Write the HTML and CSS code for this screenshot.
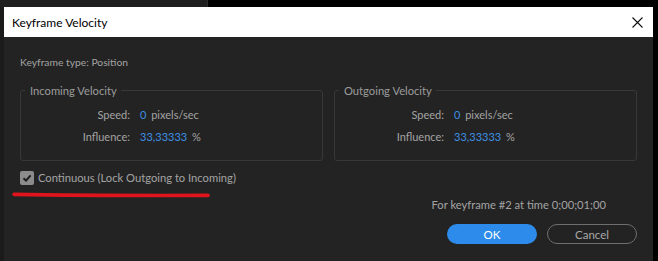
FILE: index.html
```html
<!DOCTYPE html>
<html lang="en">
<head>
    <meta charset="UTF-8">
    <meta name="viewport" content="width=device-width, initial-scale=1.0">
    <title>Keyframe Velocity</title>
    <link rel="stylesheet" href="styles.css">
</head>
<body>
    <div class="top-strip">
        <div class="panel-edge"></div>
    </div>

    <div class="screen">
        <div class="left-edge"></div>

        <div class="dialog">
            <header class="titlebar">
                <span class="title">Keyframe Velocity</span>
                <svg class="close" width="11" height="11" viewBox="0 0 11 11">
                    <path d="M0.5 0.5 L10.5 10.5 M10.5 0.5 L0.5 10.5" stroke="#111" stroke-width="1.1" fill="none"/>
                </svg>
            </header>

            <main class="content">
                <p class="type">Keyframe type: Position</p>

                <div class="groups">
                    <fieldset class="group">
                        <legend>Incoming Velocity</legend>
                        <div class="fields">
                            <span class="label">Speed:</span>
                            <span><span class="value">0</span> pixels/sec</span>
                            <span class="label">Influence:</span>
                            <span><span class="value">33,33333</span> %</span>
                        </div>
                    </fieldset>

                    <fieldset class="group">
                        <legend>Outgoing Velocity</legend>
                        <div class="fields">
                            <span class="label">Speed:</span>
                            <span><span class="value">0</span> pixels/sec</span>
                            <span class="label">Influence:</span>
                            <span><span class="value">33,33333</span> %</span>
                        </div>
                    </fieldset>
                </div>

                <label class="check">
                    <span class="box">
                        <svg width="14" height="14" viewBox="0 0 14 14">
                            <path d="M3.5 7.2 L6 9.6 L10.6 4.4" stroke="#1c1c1c" stroke-width="2" fill="none"/>
                        </svg>
                    </span>
                    Continuous (Lock Outgoing to Incoming)
                </label>

                <!-- red marker stroke drawn over the screenshot -->
                <svg class="marker" width="204" height="8" viewBox="0 0 204 8">
                    <path d="M3 3.4 C 60 4.4, 130 4.6, 197 4.4" stroke="#e0141c" stroke-width="3.6" stroke-linecap="round" fill="none"/>
                </svg>

                <p class="info">For keyframe #2 at time 0;00;01;00</p>

                <div class="buttons">
                    <button class="btn btn-ok">OK</button>
                    <button class="btn btn-cancel">Cancel</button>
                </div>
            </main>
        </div>
    </div>
</body>
</html>
```

FILE: styles.css
```css
body {
    margin: 0;
    background-color: #000;
    font-family: Lato, "Open Sans", sans-serif;
    font-size: 11px;
    color: #a3a3a3;
    overflow: hidden;
}

.top-strip {
    height: 7px;
    display: flex;
}

.panel-edge {
    width: 207px;
    background-color: #1f1f1f;
    border-right: 1px solid #2c2c2c;
}

.screen {
    display: flex;
}

.left-edge {
    width: 4px;
    height: 254px;
    background-color: #1b1b1b;
}

.dialog {
    width: 649px;
    height: 254px;
    background-color: #232323;
}

.titlebar {
    height: 30px;
    background-color: #fff;
    color: #000;
    display: flex;
    align-items: center;
    justify-content: space-between;
    padding: 0 10px 0 8px;
}

.title {
    font-size: 12px;
}

.close {
    margin-top: 1px;
}

.content {
    position: relative;
    padding: 18px 16px 0;
}

.type {
    margin: 0;
    height: 15px;
    line-height: 15px;
    font-size: 10.3px;
}

.groups {
    display: flex;
    gap: 11px;
    margin-top: 14px;
}

.group {
    flex: 1;
    margin: 0;
    padding: 10px 0 16px;
    border: 1px solid #383838;
    border-radius: 3px;
    min-width: 0;
}

legend {
    margin-left: 4px;
    padding: 0 4px 0 5px;
    font-size: 11.2px;
    color: #9c9c9c;
}

.fields {
    display: grid;
    grid-template-columns: 109px auto;
    column-gap: 10px;
    row-gap: 7px;
    line-height: 15px;
    font-size: 11px;
}

.label {
    text-align: right;
}

.value {
    color: #3d8fe4;
    margin-right: 2px;
}

.check {
    display: flex;
    align-items: center;
    gap: 4px;
    margin-top: 9px;
    font-size: 11.2px;
    height: 15px;
}

.box {
    width: 14px;
    height: 14px;
    border-radius: 2px;
    background-color: #8c8c8c;
    display: flex;
}

.marker {
    position: absolute;
    left: 7px;
    top: 154px;
}

.info {
    margin: 12px 31px 0 0;
    text-align: right;
    line-height: 15px;
    font-size: 11.2px;
}

.buttons {
    display: flex;
    justify-content: flex-end;
    gap: 10px;
    margin-top: 12px;
}

.btn {
    width: 90px;
    height: 20px;
    border-radius: 10px;
    font-family: inherit;
    font-size: 11.5px;
    padding: 0;
    cursor: pointer;
}

.btn-ok {
    background-color: #2d8ceb;
    border: none;
    color: #fff;
}

.btn-cancel {
    background-color: transparent;
    border: 1px solid #6e6e6e;
    color: #a8a8a8;
}
```
